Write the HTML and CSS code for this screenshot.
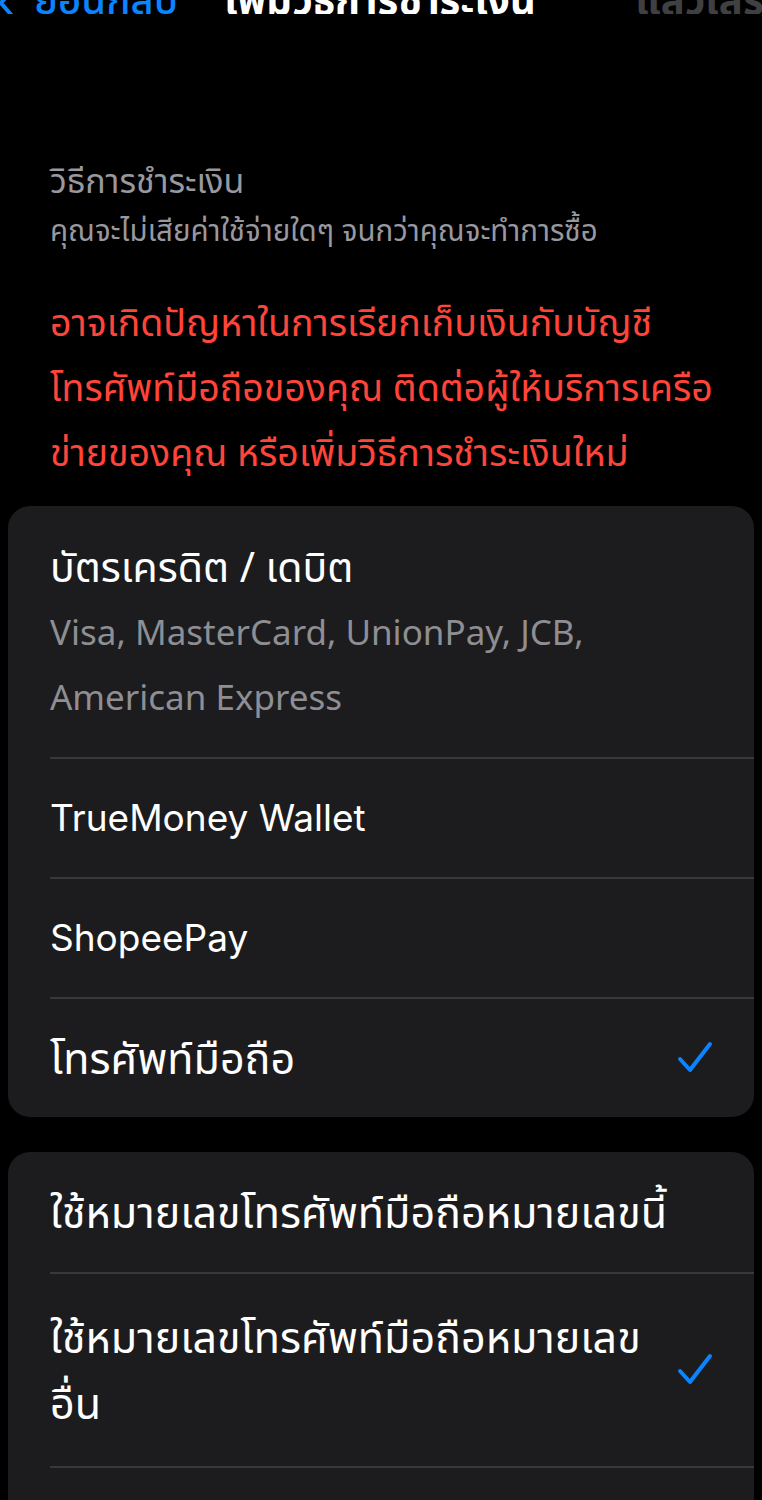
FILE: index.html
```html
<!DOCTYPE html>
<html lang="th">
<head>
<meta charset="utf-8">
<link rel="stylesheet" href="styles.css">
</head>
<body>
<div class="nav">
  <div class="nav-back">
    <svg class="chev" width="20" height="34" viewBox="0 0 20 34"><path d="M16 2 L3 17 L16 32" fill="none" stroke="#0a84ff" stroke-width="4" stroke-linecap="round" stroke-linejoin="round"/></svg>
    <span class="back-text">ย้อนกลับ</span>
  </div>
  <div class="nav-title">เพิ่มวิธีการชำระเงิน</div>
  <div class="nav-done">แล้วเสร็จ</div>
</div>

<div class="header">
  <div class="header-title">วิธีการชำระเงิน</div>
  <div class="header-sub">คุณจะไม่เสียค่าใช้จ่ายใดๆ จนกว่าคุณจะทำการซื้อ</div>
</div>

<div class="warning">อาจเกิดปัญหาในการเรียกเก็บเงินกับบัญชี<br>โทรศัพท์มือถือของคุณ ติดต่อผู้ให้บริการเครือ<br>ข่ายของคุณ หรือเพิ่มวิธีการชำระเงินใหม่</div>

<div class="card">
  <div class="row row-card">
    <div class="row-text">
      <div class="row-title">บัตรเครดิต / เดบิต</div>
      <div class="row-sub">Visa, MasterCard, UnionPay, JCB,<br>American Express</div>
    </div>
  </div>
  <div class="row"><div class="row-text latin">TrueMoney Wallet</div></div>
  <div class="row"><div class="row-text latin">ShopeePay</div></div>
  <div class="row">
    <div class="row-text">โทรศัพท์มือถือ</div>
    <svg class="check" width="38" height="38" viewBox="0 0 38 38"><path d="M4 20 L14 31 L34 5" fill="none" stroke="#0a84ff" stroke-width="4" stroke-linecap="round" stroke-linejoin="round"/></svg>
  </div>
</div>

<div class="card card2">
  <div class="row"><div class="row-text">ใช้หมายเลขโทรศัพท์มือถือหมายเลขนี้</div></div>
  <div class="row row-tall">
    <div class="row-text">ใช้หมายเลขโทรศัพท์มือถือหมายเลข<br>อื่น</div>
    <svg class="check" width="38" height="38" viewBox="0 0 38 38"><path d="M4 20 L14 31 L34 5" fill="none" stroke="#0a84ff" stroke-width="4" stroke-linecap="round" stroke-linejoin="round"/></svg>
  </div>
  <div class="row"><div class="row-text"></div></div>
</div>
</body>
</html>
```

FILE: styles.css
```css
html, body {
  margin: 0;
  padding: 0;
  background: #000;
}
body {
  font-family: "Noto Sans", "Noto Sans Thai", "DejaVu Sans", sans-serif;
  color: #fff;
  overflow: hidden;
  height: 1500px;
}
.nav {
  display: flex;
  align-items: flex-end;
  height: 22px;
  margin-top: -8px;
  overflow: hidden;
  white-space: nowrap;
}
.nav-back {
  display: flex;
  align-items: flex-end;
  margin-left: -2px;
}
.chev {
  margin-bottom: -6px;
}
.back-text {
  color: #0a84ff;
  font-size: 40px;
  line-height: 30px;
  margin-left: 16px;
  font-weight: 500;
}
.nav-title {
  font-size: 40px;
  line-height: 30px;
  font-weight: 700;
  margin-left: 46px;
}
.nav-done {
  font-size: 40px;
  line-height: 30px;
  color: #404042;
  font-weight: 700;
  margin-left: auto;
  margin-right: -24px;
}
.header {
  padding: 138px 0 0 50px;
  color: #98989f;
}
.header-title {
  font-size: 34px;
  line-height: 56px;
}
.header-sub {
  font-size: 29.5px;
  line-height: 44px;
  white-space: nowrap;
}
.warning {
  color: #ff453a;
  font-size: 37.5px;
  line-height: 65px;
  padding: 37px 0 22px 50px;
  white-space: nowrap;
}
.card {
  background: #1c1c1e;
  border-radius: 22px;
  margin: 0 8px;
  overflow: hidden;
}
.card2 {
  margin-top: 35px;
}
.row {
  display: flex;
  align-items: center;
  min-height: 120px;
  margin-left: 42px;
  border-top: 2px solid #38383a;
  box-sizing: border-box;
  padding-right: 40px;
}
.row:first-child {
  border-top: none;
}
.row-text {
  flex: 1;
  font-size: 43px;
  line-height: 66px;
  white-space: nowrap;
}
.row-text.latin {
  font-family: "Inter", "Noto Sans", sans-serif;
  font-size: 37px;
}
.row-card {
  min-height: 251px;
  align-items: flex-start;
  padding-top: 28px;
}
.row-title {
  font-size: 41px;
  line-height: 65px;
}
.row-sub {
  color: #8e8e93;
  font-size: 35px;
  line-height: 65px;
}
.row-tall {
  min-height: 194px;
}
.check {
  flex: none;
}
```
